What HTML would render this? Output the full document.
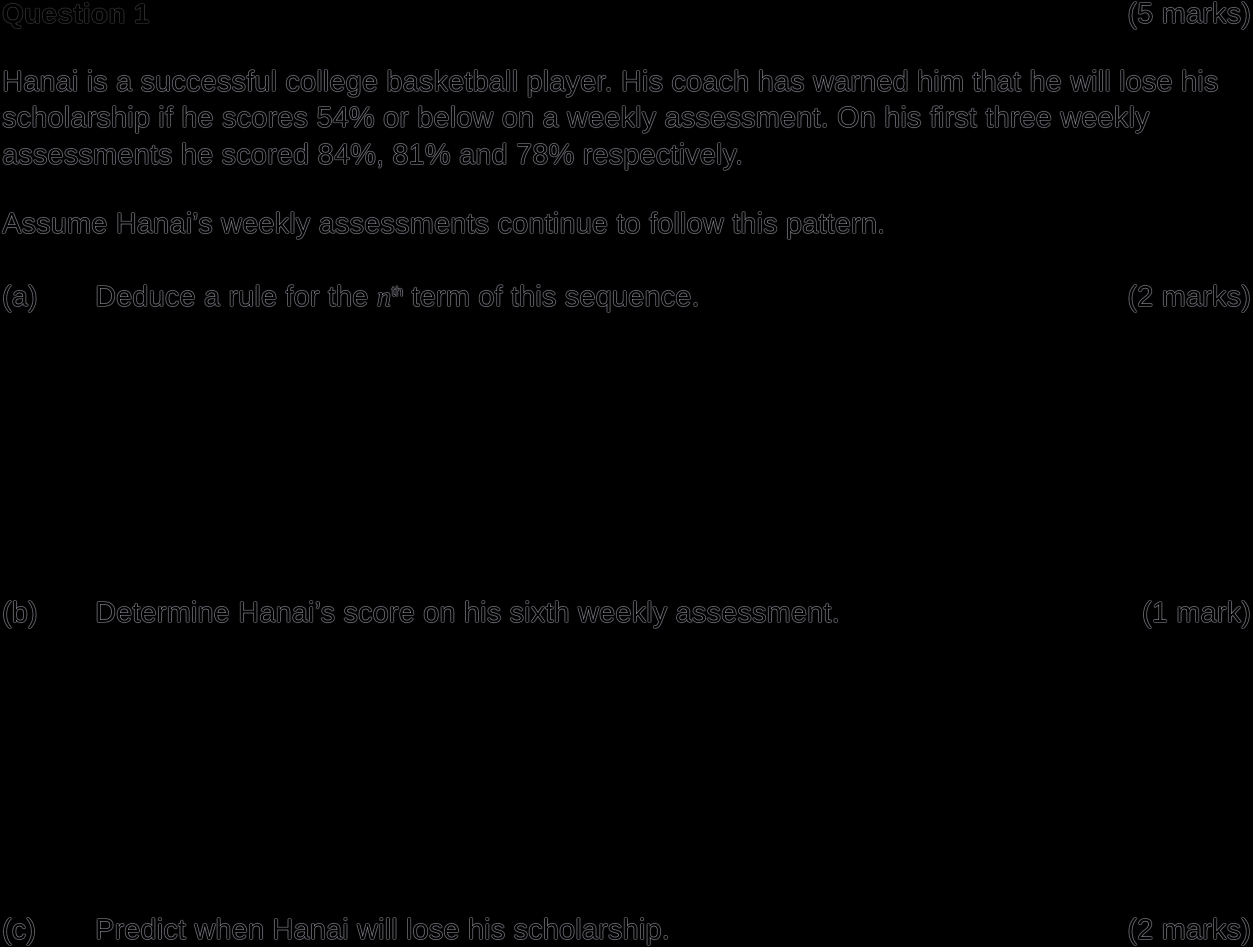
<!DOCTYPE html><html><head><style>
body{margin:0;background:#000;width:1253px;height:947px;overflow:hidden;position:relative;font-family:"Liberation Sans",Arial,sans-serif;font-size:29px;color:#000;}
.t{position:absolute;white-space:nowrap;line-height:30px;letter-spacing:0.13px;text-shadow:0 0 1px #d0d0e0,0 0 1px #d0d0e0,0 0 1px #d0d0e0;}
.b{font-weight:bold;font-size:28px;letter-spacing:0.3px;text-shadow:0 0 1px #777,0 0 1px #777;}
.r{right:2px;}
sup{font-size:14px;line-height:0;vertical-align:10px;}
</style></head><body>
<div class="t b" style="left:2px;top:-1px">Question 1</div>
<div class="t r" style="top:-1px">(5 marks)</div>
<div class="t" style="left:2px;top:67px">Hanai is a successful college basketball player. His coach has warned him that he will lose his</div>
<div class="t" style="left:2px;top:103px">scholarship if he scores 54% or below on a weekly assessment. On his first three weekly</div>
<div class="t" style="left:2px;top:140px">assessments he scored 84%, 81% and 78% respectively.</div>
<div class="t" style="left:2px;top:209px">Assume Hanai’s weekly assessments continue to follow this pattern.</div>
<div class="t" style="left:2px;top:282px">(a)</div>
<div class="t" style="left:95px;top:282px">Deduce a rule for the <i style="font-family:'Liberation Serif',serif">n</i><sup>th</sup> term of this sequence.</div>
<div class="t r" style="top:282px">(2 marks)</div>
<div class="t" style="left:2px;top:598px">(b)</div>
<div class="t" style="left:95px;top:598px">Determine Hanai’s score on his sixth weekly assessment.</div>
<div class="t r" style="top:598px">(1 mark)</div>
<div class="t" style="left:2px;top:915px">(c)</div>
<div class="t" style="left:95px;top:915px">Predict when Hanai will lose his scholarship.</div>
<div class="t r" style="top:915px">(2 marks)</div>
</body></html>
